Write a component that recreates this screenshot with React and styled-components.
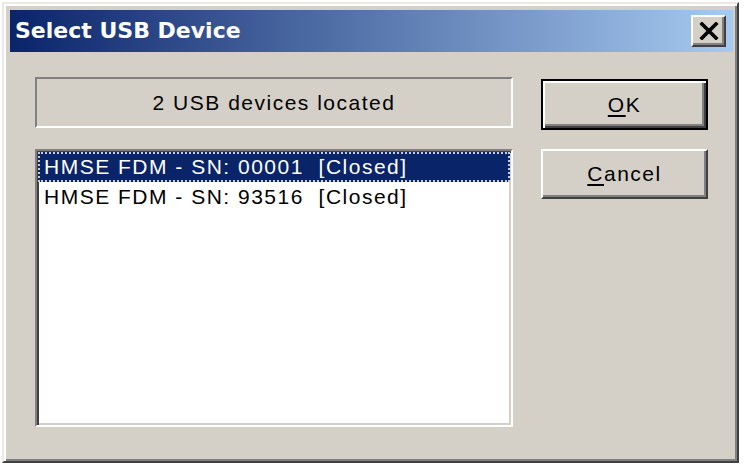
import React from 'react';
import styled, { createGlobalStyle } from 'styled-components';

const GlobalStyle = createGlobalStyle`
    body {
        margin: 0;
        background: #ffffff;
    }
`;

const Window = styled.div`
    box-sizing: border-box;
    margin: 2px 0 0 2px;
    width: 737px;
    height: 461px;
    background: #d4d0c8;
    border: 2px solid;
    border-color: #ece9e2 #404040 #404040 #ece9e2;
    box-shadow: inset 2px 2px 0 #ffffff, inset -2px -2px 0 #808080;
    padding: 6px 4px 6px 6px;
    display: flex;
    flex-direction: column;
`;

const TitleBar = styled.div`
    height: 40px;
    display: flex;
    align-items: center;
    justify-content: space-between;
    padding: 0 7px 2px 5px;
    background: linear-gradient(to right, #0a246a, #a6caf0);
`;

const Title = styled.span`
    font-family: "DejaVu Sans", "Liberation Sans", sans-serif;
    font-weight: bold;
    font-size: 22px;
    color: #ffffff;
`;

const CloseButton = styled.button`
    box-sizing: border-box;
    width: 35px;
    height: 32px;
    margin-top: 2px;
    padding: 0;
    display: flex;
    align-items: center;
    justify-content: center;
    background: #d4d0c8;
    border: 2px solid;
    border-color: #ffffff #404040 #404040 #ffffff;
    box-shadow: inset -2px -2px 0 #808080;
`;

const Body = styled.div`
    display: flex;
    gap: 28px;
    padding: 25px 0 0 25px;
`;

const LeftColumn = styled.div`
    width: 478px;
    display: flex;
    flex-direction: column;
    gap: 21px;
`;

const RightColumn = styled.div`
    width: 167px;
    display: flex;
    flex-direction: column;
    gap: 19px;
    padding-top: 2px;
`;

const Label = styled.div`
    font-family: "Liberation Sans", Arial, sans-serif;
    font-size: 21px;
    letter-spacing: 1.5px;
    color: #000000;
`;

const StatusBox = styled(Label)`
    box-sizing: border-box;
    height: 51px;
    display: flex;
    align-items: center;
    justify-content: center;
    border: 2px solid;
    border-color: #808080 #ffffff #ffffff #808080;
`;

const ListBox = styled.div`
    box-sizing: border-box;
    height: 278px;
    padding: 1px;
    background: #ffffff;
    border: 2px solid;
    border-color: #808080 #ffffff #ffffff #808080;
    box-shadow: inset 2px 2px 0 #404040, inset -2px -2px 0 #d4d0c8;
`;

const ListRow = styled(Label)`
    height: 30px;
    line-height: 30px;
    padding-left: 6px;
    white-space: pre;
    background: ${props => (props.$selected ? '#0a246a' : 'transparent')};
    color: ${props => (props.$selected ? '#ffffff' : '#000000')};
    outline: ${props => (props.$selected ? '2px dotted #c8ccd8' : 'none')};
    outline-offset: -2px;
`;

const Button = styled.button`
    box-sizing: border-box;
    height: ${props => (props.$default ? '51px' : '50px')};
    width: 100%;
    padding: 0;
    background: #d4d0c8;
    font-family: "Liberation Sans", Arial, sans-serif;
    font-size: 21px;
    letter-spacing: 1.5px;
    color: #000000;
    border: 2px solid;
    border-color: ${props => (props.$default
        ? '#000000'
        : '#ffffff #404040 #404040 #ffffff')};
    box-shadow: ${props => (props.$default
        ? 'inset 2px 2px 0 #ffffff, inset -2px -2px 0 #404040, inset -4px -4px 0 #808080'
        : 'inset -2px -2px 0 #808080')};
`;

const Key = styled.span`
    text-decoration: underline;
    text-underline-offset: 3px;
`;

const devices = [
    { serial: '00001', state: 'Closed' },
    { serial: '93516', state: 'Closed' },
];

const CloseIcon = () => (
    <svg width="20" height="18" viewBox="0 0 20 18">
        <path d="M3 2 L17 16 M17 2 L3 16" stroke="#000" strokeWidth="3.6" strokeLinecap="square" />
    </svg>
);

const App = () => {
    return (
        <>
            <GlobalStyle />
            <Window>
                <TitleBar>
                    <Title>Select USB Device</Title>
                    <CloseButton>
                        <CloseIcon />
                    </CloseButton>
                </TitleBar>
                <Body>
                    <LeftColumn>
                        <StatusBox>{devices.length} USB devices located</StatusBox>
                        <ListBox>
                            {devices.map((d, i) => (
                                <ListRow key={d.serial} $selected={i === 0}>
                                    {`HMSE FDM - SN: ${d.serial}  [${d.state}]`}
                                </ListRow>
                            ))}
                        </ListBox>
                    </LeftColumn>
                    <RightColumn>
                        <Button $default>
                            <Key>O</Key>K
                        </Button>
                        <Button>
                            <Key>C</Key>ancel
                        </Button>
                    </RightColumn>
                </Body>
            </Window>
        </>
    );
};

export default App;
